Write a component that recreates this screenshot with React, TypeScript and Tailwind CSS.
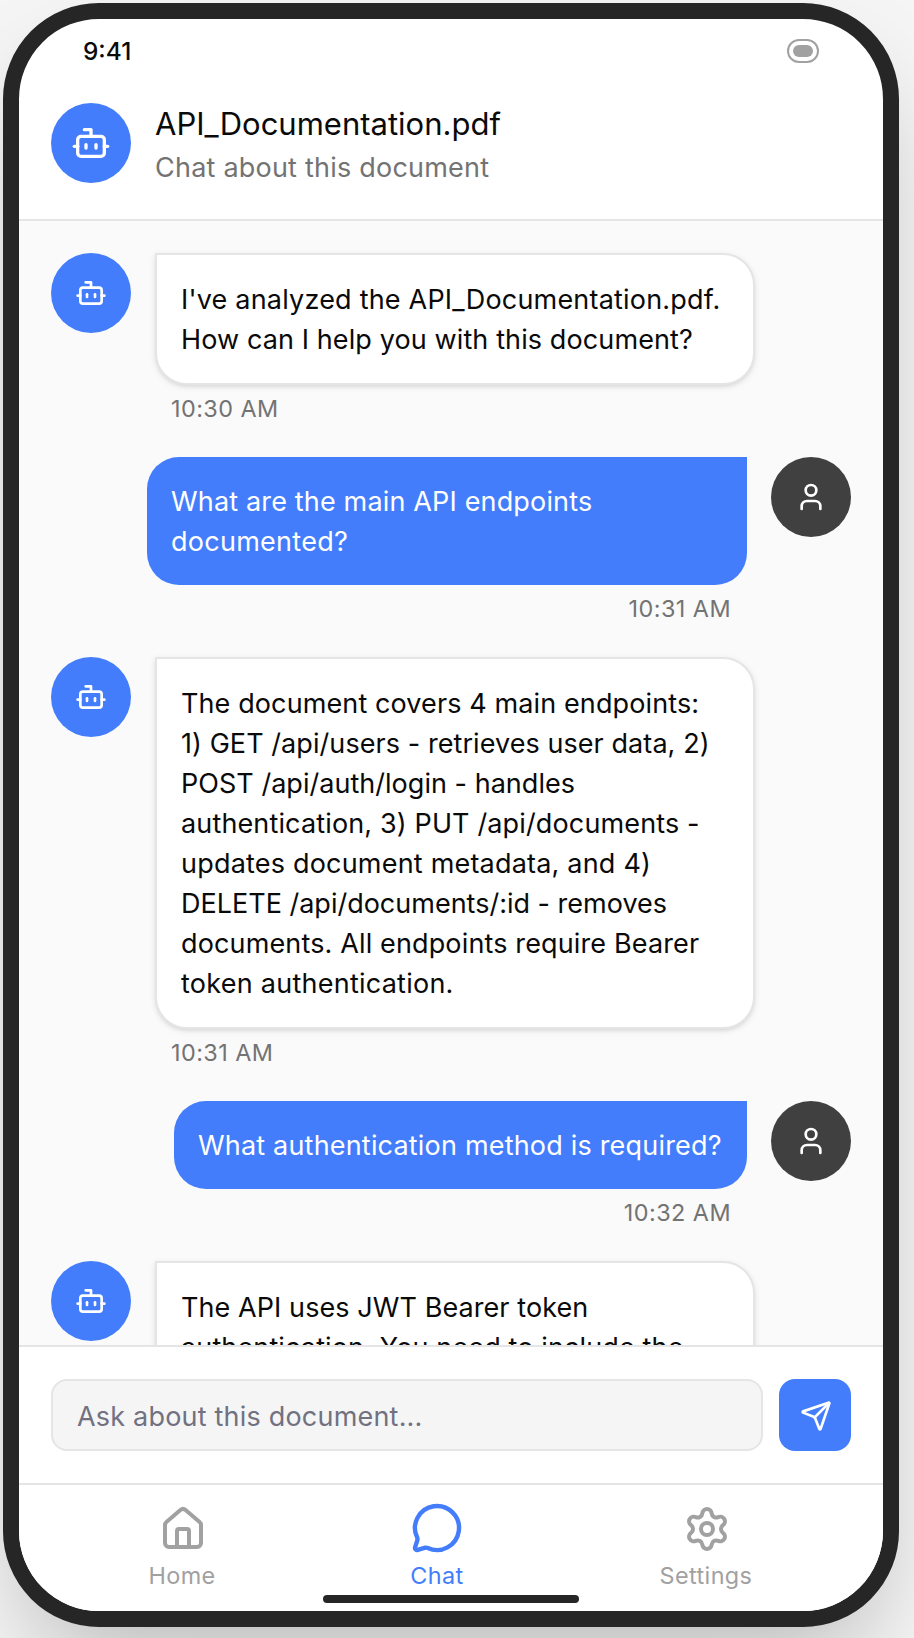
import { Bot, House, MessageCircle, Send, Settings, User } from "lucide-react";

type Line = { text: string; tracking: string };
type Message = { from: "bot" | "user"; time?: string; lines: Line[] };

const messages: Message[] = [
  {
    from: "bot",
    time: "10:30 AM",
    lines: [
      { text: "I've analyzed the API_Documentation.pdf.", tracking: "tracking-[0.2px]" },
      { text: "How can I help you with this document?", tracking: "tracking-[0.11px]" },
    ],
  },
  {
    from: "user",
    time: "10:31 AM",
    lines: [
      { text: "What are the main API endpoints", tracking: "tracking-[0.16px]" },
      { text: "documented?", tracking: "tracking-[0.27px]" },
    ],
  },
  {
    from: "bot",
    time: "10:31 AM",
    lines: [
      { text: "The document covers 4 main endpoints:", tracking: "tracking-[0.11px]" },
      { text: "1) GET /api/users - retrieves user data, 2)", tracking: "tracking-[0.07px]" },
      { text: "POST /api/auth/login - handles", tracking: "tracking-[0.03px]" },
      { text: "authentication, 3) PUT /api/documents -", tracking: "tracking-[0.14px]" },
      { text: "updates document metadata, and 4)", tracking: "tracking-[0.2px]" },
      { text: "DELETE /api/documents/:id - removes", tracking: "tracking-[0px]" },
      { text: "documents. All endpoints require Bearer", tracking: "tracking-[0.14px]" },
      { text: "token authentication.", tracking: "tracking-[0.25px]" },
    ],
  },
  {
    from: "user",
    time: "10:32 AM",
    lines: [{ text: "What authentication method is required?", tracking: "tracking-[0.19px]" }],
  },
  {
    from: "bot",
    lines: [
      { text: "The API uses JWT Bearer token", tracking: "tracking-[0.08px]" },
      { text: "authentication. You need to include the", tracking: "tracking-[0.13px]" },
    ],
  },
];

function Lines({ lines }: { lines: Line[] }) {
  return (
    <>
      {lines.map((line) => (
        <span key={line.text} className={`block whitespace-nowrap ${line.tracking}`}>
          {line.text}
        </span>
      ))}
    </>
  );
}

function BotMessage({ message }: { message: Message }) {
  return (
    <div className="flex gap-6">
      <div className="flex size-20 shrink-0 items-center justify-center rounded-full bg-[#437dfc] text-white">
        <Bot size={32} />
      </div>
      <div>
        <div className="w-[600px] rounded-[32px] rounded-tl-none border-2 border-[#e5e5e5] bg-white px-6 pt-[25px] pb-[23px] text-[27px] leading-10 text-[#0a0a0a] shadow-[0_2px_6px_rgba(0,0,0,0.1),0_2px_4px_-2px_rgba(0,0,0,0.1)]">
          <Lines lines={message.lines} />
        </div>
        {message.time && (
          <p className="mt-2 ml-4 text-[23.4px] leading-8 tracking-[0.45px] text-[#737373]">{message.time}</p>
        )}
      </div>
    </div>
  );
}

function UserMessage({ message }: { message: Message }) {
  return (
    <div className="flex justify-end gap-6">
      <div className="flex flex-col items-end">
        <div
          className={`rounded-[32px] rounded-tr-none bg-[#437dfc] px-6 pt-[25px] pb-[23px] text-[27px] leading-10 text-white ${
            message.lines.length > 1 ? "w-[600px]" : "w-[573px]"
          }`}
        >
          <Lines lines={message.lines} />
        </div>
        <p className="mt-2 mr-4 text-[23.4px] leading-8 tracking-[0.45px] text-[#737373]">{message.time}</p>
      </div>
      <div className="flex size-20 shrink-0 items-center justify-center rounded-full bg-[#404040] text-white">
        <User size={32} />
      </div>
    </div>
  );
}

export default function App() {
  return (
    <div className="h-[1638px] w-[914px] overflow-hidden bg-[#f5f5f5] p-[3px] font-['Inter','Liberation_Sans',sans-serif]">
      <div className="relative flex h-[1624px] w-[896px] flex-col overflow-hidden rounded-[96px] border-16 border-[#262626] bg-white shadow-[0_50px_100px_-24px_rgba(0,0,0,0.25)]">
        <div className="flex h-16 shrink-0 items-center justify-between px-16">
          <span className="text-[24.4px] leading-8 font-medium text-[#0a0a0a]">9:41</span>
          <div className="flex h-6 w-8 items-center justify-center rounded-xl border-2 border-[#a1a1a1]">
            <div className="h-3 w-5 rounded-full bg-[#a1a1a1]" />
          </div>
        </div>

        <header className="flex h-[138px] shrink-0 items-center gap-6 border-b-2 border-[#e5e5e5] px-8 pt-4 pb-8">
          <div className="flex size-20 shrink-0 items-center justify-center rounded-full bg-[#437dfc] text-white">
            <Bot size={40} />
          </div>
          <div className="pt-0.5">
            <h1 className="text-[31px] leading-[48px] text-[#0a0a0a]">API_Documentation.pdf</h1>
            <p className="text-[27px] leading-10 tracking-[0.22px] text-[#737373]">Chat about this document</p>
          </div>
        </header>

        <main className="flex min-h-0 flex-1 flex-col gap-8 overflow-hidden bg-[#fafafa] px-8 pt-8">
          {messages.map((message, i) =>
            message.from === "bot" ? <BotMessage key={i} message={message} /> : <UserMessage key={i} message={message} />,
          )}
        </main>

        <div className="flex shrink-0 gap-4 border-t-2 border-[#e5e5e5] bg-white px-8 py-8">
          <input
            className="h-[72px] min-w-0 flex-1 rounded-2xl border-2 border-[#e5e5e5] bg-[#f5f5f5] px-6 pt-0.5 text-[27px] tracking-[0.2px] placeholder:text-[#717182]"
            placeholder="Ask about this document..."
          />
          <button className="flex size-[72px] items-center justify-center rounded-2xl bg-[#437dfc] pt-0.5 pl-0.5 text-white">
            <Send size={32} />
          </button>
        </div>

        <nav className="flex h-32 shrink-0 border-t-2 border-[#e5e5e5] bg-white pt-5 pl-[37px] text-[23.4px] leading-8 text-[#a1a1a1]">
          <div className="flex w-[254px] flex-col items-center gap-[7px]">
            <House size={48} />
            <span className="pr-0.5 tracking-[0.4px]">Home</span>
          </div>
          <div className="flex w-[254px] flex-col items-center gap-[7px] text-[#437dfc]">
            <MessageCircle size={48} className="-mt-px mb-px scale-110" />
            <span className="tracking-[0.4px]">Chat</span>
          </div>
          <div className="flex w-[286px] flex-col items-center gap-[7px]">
            <Settings size={48} />
            <span className="pr-0.5 tracking-[0.4px]">Settings</span>
          </div>
        </nav>

        <div className="absolute bottom-2 left-1/2 h-2 w-64 -translate-x-1/2 rounded-full bg-[#262626]" />
      </div>
    </div>
  );
}
